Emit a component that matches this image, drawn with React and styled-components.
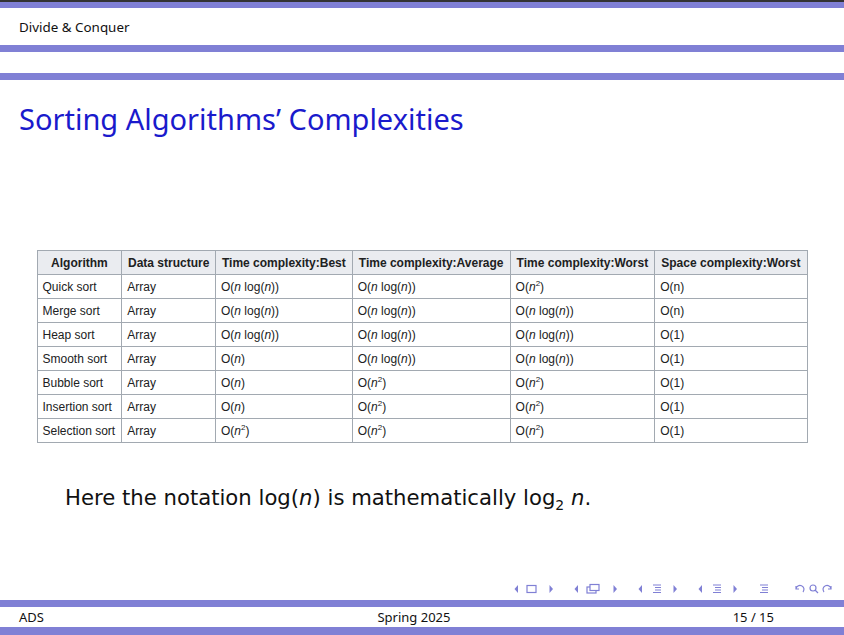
import React from "react";
import styled, { createGlobalStyle } from "styled-components";

const G = createGlobalStyle`
  html,body{margin:0;padding:0;background:#fff;}
  body{font-family:"Noto Sans","DejaVu Sans",sans-serif;}
`;
const P = "#8080d5";
const Slide = styled.div`
  width:844px;height:635px;display:flex;flex-direction:column;overflow:hidden;
  border-top:2px solid #333;box-sizing:border-box;
`;
const Bar = styled.div`height:${p => p.h}px;background:${P};flex:none;`;
const Head = styled.div`
  height:37px;display:flex;align-items:center;padding-left:19px;font-size:13.4px;color:#111;flex:none;
`;
const Gap = styled.div`height:${p => p.h}px;flex:none;`;
const Title = styled.h1`
  margin:0;padding-left:19px;font-weight:400;font-size:29px;color:#1a1acc;height:78px;
  line-height:78px;flex:none;
`;
const Body = styled.div`flex:1;display:flex;flex-direction:column;align-items:center;`;
const Table = styled.table`
  border-collapse:collapse;font-family:"Liberation Sans",Arial,sans-serif;font-size:12px;color:#202122;
  margin-top:92px;width:771px;
  th,td{border:1px solid #a2a9b1;padding:0 5px;height:23px;text-align:left;white-space:nowrap;}
  th{background:#eaecf0;font-weight:700;text-align:center;}
`;
const Note = styled.p`
  margin:42px 0 0;align-self:flex-start;padding-left:65px;color:#111;
  font-family:"DejaVu Sans",sans-serif;font-size:21.2px;
`;
const Nav = styled.div`
  height:22px;display:flex;justify-content:flex-end;align-items:center;gap:20px;padding-right:8px;color:${P};font-size:12px;flex:none;
`;
const Foot = styled.div`
  height:20px;display:flex;align-items:center;font-size:13px;color:#111;flex:none;
`;
const FL = styled.span`padding-left:19px;width:340px;`;
const FC = styled.span`width:110px;text-align:center;`;
const FR = styled.span`flex:1;text-align:right;padding-right:70px;`;

const nlog = <>O(<i>n</i> log(<i>n</i>))</>;
const n = <>O(<i>n</i>)</>;
const n2 = <>O(<i>n</i><sup style={{ fontSize: 8 }}>2</sup>)</>;
const rows = [
  ["Quick sort", nlog, nlog, n2, "O(n)"],
  ["Merge sort", nlog, nlog, nlog, "O(n)"],
  ["Heap sort", nlog, nlog, nlog, "O(1)"],
  ["Smooth sort", n, nlog, nlog, "O(1)"],
  ["Bubble sort", n, n2, n2, "O(1)"],
  ["Insertion sort", n, n2, n2, "O(1)"],
  ["Selection sort", n2, n2, n2, "O(1)"],
];

const Ico = ({ children, w = 14 }) => (
  <svg width={w} height="12" viewBox={`0 0 ${w} 12`} fill="none" stroke={P} strokeWidth="1.2">{children}</svg>
);
const L = () => <path d="M4 2 L0.5 6 L4 10Z" fill={P} stroke="none" />;
const R = () => <path d="M0.5 2 L4 6 L0.5 10Z" fill={P} stroke="none" />;
const Lines = () => <g><path d="M2 2h8M4 4.5h6M4 7h6M2 9.5h8" /></g>;

export default function App() {
  return (
    <Slide>
      <G />
      <Bar h={6} />
      <Head>Divide &amp; Conquer</Head>
      <Bar h={7} />
      <Gap h={21} />
      <Bar h={7} />
      <Title>Sorting Algorithms’ Complexities</Title>
      <Body>
        <Table>
          <thead>
            <tr>
              <th>Algorithm</th><th>Data structure</th><th>Time complexity:Best</th>
              <th>Time complexity:Average</th><th>Time complexity:Worst</th><th>Space complexity:Worst</th>
            </tr>
          </thead>
          <tbody>
            {rows.map((r, i) => (
              <tr key={i}>
                <td>{r[0]}</td><td>Array</td><td>{r[1]}</td><td>{r[2]}</td><td>{r[3]}</td><td>{r[4]}</td>
              </tr>
            ))}
          </tbody>
        </Table>
        <Note>Here the notation log(<i>n</i>) is mathematically log<sub style={{ fontSize: 14 }}>2</sub> <i>n</i>.</Note>
      </Body>
      <Nav>
        <Ico w={40}><L /><rect x="13" y="2.5" width="9" height="7" /><g transform="translate(35 0)"><R /></g></Ico>
        <Ico w={44}><L /><rect x="13" y="4" width="9" height="6" /><rect x="16" y="1.5" width="9" height="6" fill="#fff" /><g transform="translate(39 0)"><R /></g></Ico>
        <Ico w={40}><L /><g transform="translate(13 0)"><Lines /></g><g transform="translate(35 0)"><R /></g></Ico>
        <Ico w={40}><L /><g transform="translate(13 0)"><Lines /></g><g transform="translate(35 0)"><R /></g></Ico>
        <Ico w={14}><Lines /></Ico>
        <Ico w={44}><path d="M11 9a4 4 0 1 0-7-3M4 3v3h3" /><circle cx="21" cy="5" r="3" /><path d="M23 7l3 3" /><path d="M32 9a4 4 0 1 1 7-3M39 3v3h-3" /></Ico>
      </Nav>
      <Bar h={7} />
      <Foot><FL>ADS</FL><FC>Spring 2025</FC><FR>15 / 15</FR></Foot>
      <Bar h={8} />
    </Slide>
  );
}
